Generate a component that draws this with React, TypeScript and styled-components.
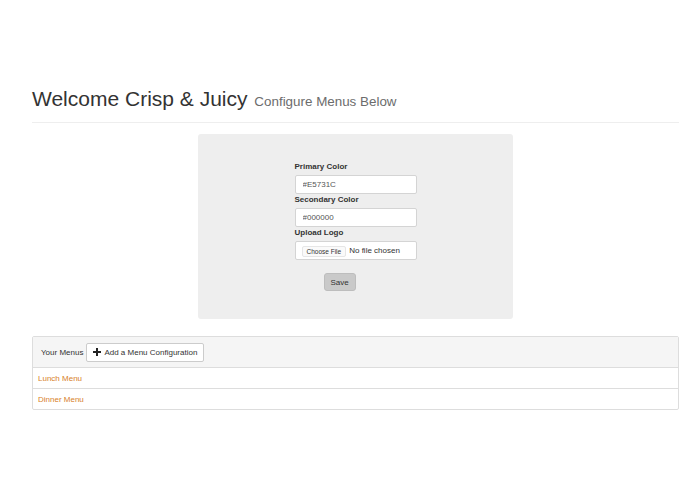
import React from 'react'
import styled, { createGlobalStyle } from 'styled-components'

const GlobalStyle = createGlobalStyle`
    html, body {
        margin: 0;
        padding: 0;
        background: #fff;
        font-family: "Liberation Sans", Arial, sans-serif;
        color: #333;
    }
    * {
        box-sizing: border-box;
    }
`

const Page = styled.main`
    width: 647px;
    margin-left: 32px;
    padding-top: 87px;
    font-size: 8px;
`

const Header = styled.header`
    border-bottom: 1px solid #eee;
    padding-bottom: 8px;
    margin-bottom: 11px;

    & h1 {
        margin: 0;
        font-size: 21px;
        line-height: 24px;
        font-weight: 500;
        color: #333;
    }

    & small {
        font-size: 13.4px;
        font-weight: 400;
        color: #6c6c6c;
        margin-left: 1px;
    }
`

const Well = styled.section`
    width: 315px;
    margin: 0 auto;
    background-color: #eee;
    border-radius: 3px;
    padding: 27px 0 28px;
    display: flex;
    justify-content: center;
`

const Form = styled.form`
    width: 122px;
    display: flex;
    flex-direction: column;
`

const Label = styled.label`
    display: block;
    font-weight: bold;
    font-size: 8px;
    line-height: 11px;
    margin-bottom: 3px;
    color: #333;
`

const Field = styled.input`
    display: block;
    width: 122px;
    height: 19px;
    border: 1px solid #d4d4d4;
    border-radius: 2px;
    background: #fff;
    padding: 0 7px;
    font-family: inherit;
    font-size: 8px;
    color: #555;
    outline: none;
`

const FileBox = styled.label`
    display: flex;
    align-items: center;
    width: 122px;
    height: 19px;
    border: 1px solid #d4d4d4;
    border-radius: 2px;
    background: #fff;
    padding: 0 6px;
    font-size: 8px;
    color: #333;

    & input {
        display: none;
    }

    & span.pick {
        display: inline-block;
        font-size: 6.5px;
        line-height: 9px;
        padding: 0 4px;
        border: 1px solid #e6e6e6;
        border-radius: 2px;
        background: #fafafa;
        margin-right: 3px;
        margin-top: 1px;
    }
`

const SaveButton = styled.button`
    align-self: flex-start;
    margin: 13px 0 0 29px;
    width: 32px;
    height: 18px;
    border: 1px solid #bdbdbd;
    border-radius: 3px;
    background: #c9c9c9;
    font-family: inherit;
    font-size: 8px;
    color: #333;
    padding: 0;
`

const Panel = styled.section`
    margin-top: 17px;
    border: 1px solid #ddd;
    border-radius: 2px;
`

const PanelHeading = styled.div`
    display: flex;
    align-items: center;
    height: 31px;
    padding: 0 8px;
    background: #f5f5f5;
    border-bottom: 1px solid #ddd;
    font-size: 8px;
    color: #333;
`

const AddButton = styled.button`
    display: flex;
    align-items: center;
    gap: 3px;
    height: 19px;
    margin-left: 3px;
    padding: 0 6px;
    border: 1px solid #ccc;
    border-radius: 2px;
    background: #fff;
    font-family: inherit;
    font-size: 8px;
    color: #333;
`

const MenuRow = styled.a<{ last?: boolean }>`
    display: flex;
    align-items: center;
    height: ${p => (p.last ? '20px' : '21px')};
    padding: 0 5px;
    color: #d8812b;
    text-decoration: none;
    font-size: 8px;
    border-bottom: ${p => (p.last ? 'none' : '1px solid #ddd')};
`

const Plus = () => (
    <svg width="8" height="8" viewBox="0 0 8 8">
        <path d="M3 0h2v3h3v2H5v3H3V5H0V3h3z" fill="#222" />
    </svg>
)

export default function App() {
    return (
        <Page>
            <GlobalStyle />
            <Header>
                <h1>
                    Welcome Crisp &amp; Juicy <small>Configure Menus Below</small>
                </h1>
            </Header>

            <Well>
                <Form onSubmit={e => e.preventDefault()}>
                    <Label htmlFor="primary">Primary Color</Label>
                    <Field id="primary" defaultValue="#E5731C" />
                    <Label htmlFor="secondary">Secondary Color</Label>
                    <Field id="secondary" defaultValue="#000000" />
                    <Label htmlFor="logo">Upload Logo</Label>
                    <FileBox>
                        <input id="logo" type="file" />
                        <span className="pick">Choose File</span>
                        No file chosen
                    </FileBox>
                    <SaveButton type="submit">Save</SaveButton>
                </Form>
            </Well>

            <Panel>
                <PanelHeading>
                    Your Menus
                    <AddButton>
                        <Plus />
                        Add a Menu Configuration
                    </AddButton>
                </PanelHeading>
                <MenuRow href="#">Lunch Menu</MenuRow>
                <MenuRow href="#" last>Dinner Menu</MenuRow>
            </Panel>
        </Page>
    )
}
